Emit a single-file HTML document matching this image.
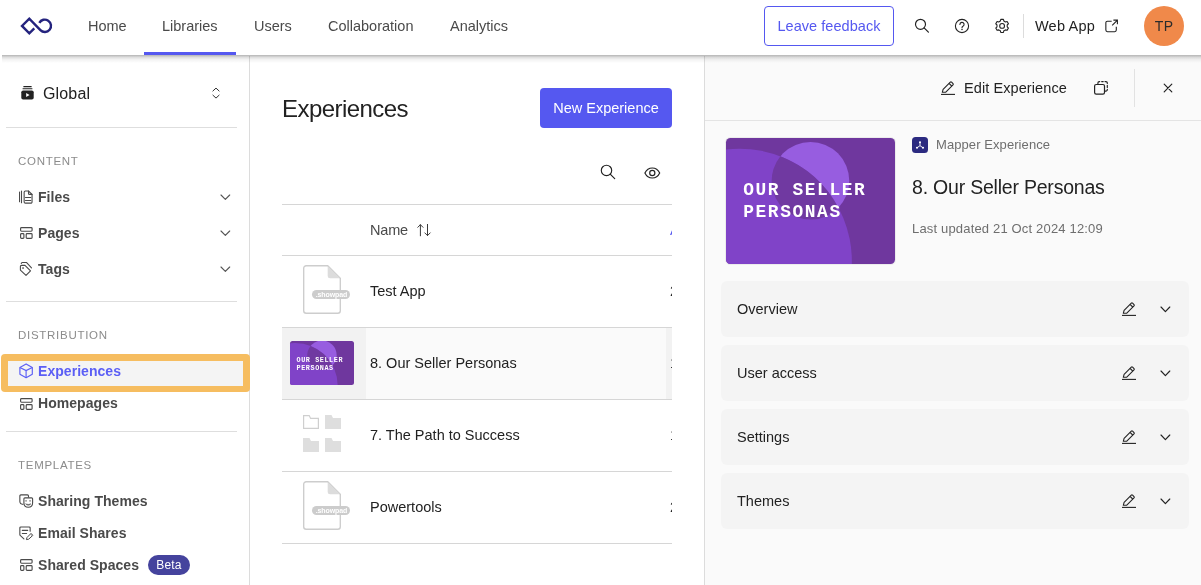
<!DOCTYPE html>
<html lang="en">
<head>
<meta charset="utf-8">
<title>Experiences</title>
<style>
*{box-sizing:border-box;margin:0;padding:0}
html,body{width:1201px;height:585px;overflow:hidden;background:#fff;font-family:"Liberation Sans",sans-serif;color:#222;}
body{position:relative}
#wrap{position:absolute;left:0;top:0;width:1201px;height:585px;will-change:transform;background:transparent}
.abs{position:absolute}
#hdr{position:absolute;left:2px;top:0;width:1199px;height:55px;background:#fff;z-index:5}
#hshadow{position:absolute;left:2px;top:55px;width:1199px;height:8px;z-index:6;background:linear-gradient(to bottom,rgba(0,0,0,.30) 0,rgba(0,0,0,.22) 1px,rgba(0,0,0,.12) 2.5px,rgba(0,0,0,.05) 4.5px,rgba(0,0,0,0) 8px)}
#hdr .in{position:absolute;left:-2px;top:0;width:1201px;height:55px}
.nav{position:absolute;top:18px;font-size:14.5px;color:#4a4a4a;line-height:17px;white-space:nowrap}
#tabline{position:absolute;left:144px;top:52px;width:92px;height:3px;background:#5558f0}
#fb{position:absolute;left:764px;top:6px;width:130px;height:40px;border:1px solid #5558f0;border-radius:4px;color:#5558f0;font-size:14.5px;line-height:39px;text-align:center;letter-spacing:.05px}
#avatar{position:absolute;left:1143.5px;top:5.5px;width:40px;height:40px;border-radius:50%;background:#f0894a;color:#2b2b2b;font-size:14px;line-height:40px;text-align:center;letter-spacing:.5px;padding-left:1.5px}
#side{position:absolute;left:0;top:56px;width:250px;height:529px;background:#fff;border-right:1px solid #dcdcdc}
.hr{position:absolute;height:1px;background:#dedede}
.sec{position:absolute;left:18px;font-size:11.5px;color:#8c8c8c;letter-spacing:.72px;line-height:14px;white-space:nowrap}
.item{position:absolute;left:38px;font-size:14px;font-weight:bold;color:#4a4a4a;line-height:17px;letter-spacing:.05px;white-space:nowrap}
#panel{position:absolute;left:704px;top:56px;width:497px;height:529px;background:#fafafa;border-left:1px solid #dcdcdc}
.row{position:absolute;left:282px;width:390px;height:1px;background:#d6d6d6}
.rname{position:absolute;left:370px;font-size:14.5px;color:#222;line-height:17px;white-space:nowrap}
.acc{position:absolute;left:721px;width:468px;height:56px;background:#f4f4f4;border-radius:6px}
.acc span{position:absolute;left:16px;top:20px;font-size:14.5px;line-height:17px;color:#222;white-space:nowrap}
</style>
</head>
<body>
<div id="wrap">

<div id="hdr"><div class="in">
<svg class="abs" style="left:18px;top:14px" width="36" height="24" viewBox="18 14 36 24" fill="none" ><path d="M34.3 28.3L29.3 33.25L22 25.95L29.3 18.65L40.42 30.18A6.2 6.2 0 1 0 39.33 22.89" stroke="#24237e" stroke-width="2.4" stroke-linejoin="miter"/></svg>
<div class="nav" style="left:88px">Home</div>
<div class="nav" style="left:162px">Libraries</div>
<div class="nav" style="left:254px">Users</div>
<div class="nav" style="left:328px">Collaboration</div>
<div class="nav" style="left:450px">Analytics</div>
<div id="tabline"></div><div id="fb">Leave feedback</div>
<svg class="abs" style="left:914px;top:18px" width="16" height="16" viewBox="0 0 16 16" fill="none" ><circle cx="6.5" cy="6.3" r="5" stroke="#222" stroke-width="1.15"/><path d="M10.1 9.9L14.4 14.2" stroke="#222" stroke-width="1.2" stroke-linecap="round"/></svg>
<svg class="abs" style="left:954px;top:18px" width="16" height="16" viewBox="0 0 16 16" fill="none" ><circle cx="8" cy="8" r="6.6" stroke="#222" stroke-width="1.1"/><path d="M5.9 6.4a2.1 2.1 0 1 1 3.1 1.9c-.7.4-1 .8-1 1.5" stroke="#222" stroke-width="1.1" stroke-linecap="round"/><circle cx="8" cy="11.6" r=".75" fill="#222"/></svg>
<svg class="abs" style="left:994px;top:18px" width="16" height="16" viewBox="0 0 16 16" fill="none" ><path d="M6.34 3.01L6.78 1.33L9.42 1.33L9.86 3.01L11.46 3.93L13.13 3.47L14.45 5.76L13.22 6.98L13.22 8.82L14.45 10.04L13.13 12.33L11.46 11.87L9.86 12.79L9.42 14.47L6.78 14.47L6.34 12.79L4.74 11.87L3.07 12.33L1.75 10.04L2.98 8.82L2.98 6.98L1.75 5.76L3.07 3.47L4.74 3.93Z" stroke="#222" stroke-width="1.1" stroke-linejoin="round"/><circle cx="8.1" cy="7.9" r="2.4" stroke="#222" stroke-width="1.1"/></svg>
<div class="abs" style="left:1023px;top:14px;width:1px;height:24px;background:#dcdcdc"></div>
<div class="nav" style="left:1035px;color:#222;letter-spacing:.2px">Web App</div>
<svg class="abs" style="left:1104px;top:18.5px" width="15" height="14" viewBox="0 0 15 14" fill="none" ><path d="M7.7 2.25H3.45A1.6 1.6 0 0 0 1.85 3.85V11.1A1.6 1.6 0 0 0 3.45 12.7H10.7A1.6 1.6 0 0 0 12.3 11.1V7.8" stroke="#222" stroke-width="1.1"/><path d="M9.4 1.15H13.4V5.15M13.2 1.35L8.2 6.35" stroke="#222" stroke-width="1.1"/></svg>
<div id="avatar">TP</div>
</div></div><div id="hshadow"></div>
<div id="side"></div><div id="panel"></div>
<svg class="abs" style="left:20.5px;top:85.5px" width="13" height="14" viewBox="0 0 13 14" fill="none" ><path d="M2.4 .6H10.6M1.6 2.7H11.4" stroke="#222" stroke-width="1.1"/><rect x=".3" y="4.4" width="12.4" height="9.2" rx="1.8" fill="#222"/><path d="M5.2 6.9V11.1L8.6 9Z" fill="#fff"/></svg>
<div class="abs" style="left:43px;top:84px;font-size:16px;line-height:19px;color:#222;letter-spacing:.15px">Global</div>
<svg class="abs" style="left:211px;top:86px" width="10" height="14" viewBox="0 0 10 14" fill="none" ><path d="M1.9 5L5 2.1L8.1 5M1.9 9.2L5 12.1L8.1 9.2" stroke="#333" stroke-width="1" stroke-linecap="round" stroke-linejoin="round"/></svg>
<div class="hr" style="left:6px;top:127px;width:231px"></div>
<div class="sec" style="top:154px">CONTENT</div>
<svg class="abs" style="left:19px;top:190px" width="15" height="14" viewBox="0 0 15 14" fill="none" ><path d="M.5 2.1V11.7M2.5 1V12.8" stroke="#4a4a4a" stroke-width="1.1" stroke-linecap="round"/><path d="M6.4 .95H9.4L13.05 4.5V11.9a1.25 1.25 0 0 1-1.25 1.25H6.4a1.25 1.25 0 0 1-1.25-1.25V2.2A1.25 1.25 0 0 1 6.4 .95Z" stroke="#4a4a4a" stroke-width="1.1" stroke-linejoin="round"/><path d="M9.5 1.1V3.4a1 1 0 0 0 1 1H13M6.5 7.5H11.8M6.5 10.5H11.8" stroke="#4a4a4a" stroke-width="1.1" stroke-linecap="round"/></svg>
<div class="item" style="top:189px">Files</div>
<svg class="abs" style="left:19.7px;top:227.2px" width="14" height="13" viewBox="0 0 14 13" fill="none" ><rect x=".6" y=".6" width="11.5" height="3.6" rx=".9" stroke="#4a4a4a" stroke-width="1.15"/><rect x=".6" y="6.6" width="3.3" height="4.7" rx=".9" stroke="#4a4a4a" stroke-width="1.15"/><rect x="6.2" y="6.6" width="5.9" height="4.7" rx=".9" stroke="#4a4a4a" stroke-width="1.15"/></svg>
<div class="item" style="top:225px">Pages</div>
<svg class="abs" style="left:19px;top:261px" width="14" height="15" viewBox="0 0 14 15" fill="none" ><path d="M1.4 9.1V5.4a1 1 0 0 1 1-1H6L11.5 9.8L7 14.4Z" stroke="#4a4a4a" stroke-width="1.1" stroke-linejoin="round"/><path d="M2.3 2.5a1 1 0 0 1 1-1.05H7.4L12.5 6.9" stroke="#4a4a4a" stroke-width="1.1" stroke-linecap="round" stroke-linejoin="round"/><rect x="3.3" y="6.3" width="1.5" height="1.5" fill="#4a4a4a"/></svg>
<div class="item" style="top:261px">Tags</div>
<svg class="abs" style="left:218.6px;top:192.8px" width="12.7" height="8.3" viewBox="0 0 12.7 8.3" fill="none" ><path d="M2 2L6.35 6.3L10.7 2" stroke="#555" stroke-width="1.15" stroke-linecap="round" stroke-linejoin="round"/></svg>
<svg class="abs" style="left:218.6px;top:228.8px" width="12.7" height="8.3" viewBox="0 0 12.7 8.3" fill="none" ><path d="M2 2L6.35 6.3L10.7 2" stroke="#555" stroke-width="1.15" stroke-linecap="round" stroke-linejoin="round"/></svg>
<svg class="abs" style="left:218.6px;top:264.8px" width="12.7" height="8.3" viewBox="0 0 12.7 8.3" fill="none" ><path d="M2 2L6.35 6.3L10.7 2" stroke="#555" stroke-width="1.15" stroke-linecap="round" stroke-linejoin="round"/></svg>
<div class="hr" style="left:6px;top:301px;width:231px"></div>
<div class="sec" style="top:328px">DISTRIBUTION</div>
<div class="abs" style="left:1px;top:353.5px;width:249px;height:38.5px;background:#f6bd60;border-radius:4px"></div>
<div class="abs" style="left:8px;top:360.5px;width:235px;height:25px;background:#f4f4f4"></div>
<svg class="abs" style="left:19px;top:363px" width="15" height="16" viewBox="0 0 15 16" fill="none" ><path d="M7.1 .9L13.3 4.4V11.2L7.1 14.7L.9 11.2V4.4Z" stroke="#5b5ef5" stroke-width="1.15" stroke-linejoin="round"/><path d="M.9 4.4L7.1 7.6L13.3 4.4M7.1 7.6V14.7" stroke="#5b5ef5" stroke-width="1.15"/></svg>
<div class="item" style="top:363px;color:#5b5ef5">Experiences</div>
<svg class="abs" style="left:19.7px;top:398.2px" width="14" height="13" viewBox="0 0 14 13" fill="none" ><rect x=".6" y=".6" width="11.5" height="3.6" rx=".9" stroke="#4a4a4a" stroke-width="1.15"/><rect x=".6" y="6.6" width="3.3" height="4.7" rx=".9" stroke="#4a4a4a" stroke-width="1.15"/><rect x="6.2" y="6.6" width="5.9" height="4.7" rx=".9" stroke="#4a4a4a" stroke-width="1.15"/></svg>
<div class="item" style="top:395px">Homepages</div>
<div class="hr" style="left:6px;top:431px;width:231px"></div>
<div class="sec" style="top:458px">TEMPLATES</div>
<svg class="abs" style="left:19px;top:494px" width="15" height="15" viewBox="0 0 15 15" fill="none" ><path d="M9.5 3.6V1.9a1 1 0 0 0-1-1H1.85a1 1 0 0 0-1 1V7.4C.85 9 2.2 10.1 4.4 10.4" stroke="#4a4a4a" stroke-width="1.1"/><path d="M5.9 3.85H12.6a1 1 0 0 1 1 1V9C13.6 11.5 11.7 13.2 9.25 13.2S4.9 11.5 4.9 9V4.85a1 1 0 0 1 1-1Z" stroke="#4a4a4a" stroke-width="1.1"/><path d="M6.5 9.7Q9.25 13 12 9.7Q9.25 11.2 6.5 9.7Z" fill="#4a4a4a" stroke="#4a4a4a" stroke-width=".4" stroke-linejoin="round"/><rect x="6.3" y="6.1" width="1.5" height="1.5" fill="#888"/><rect x="10.3" y="6.1" width="1.5" height="1.5" fill="#888"/></svg>
<div class="item" style="top:493px">Sharing Themes</div>
<svg class="abs" style="left:19px;top:526px" width="16" height="15" viewBox="0 0 16 15" fill="none" ><path d="M11.15 5.3V1.95a1 1 0 0 0-1-1H1.85a1 1 0 0 0-1 1V8.4a1.6 1.6 0 0 0 .6 1.25L4.9 12.8" stroke="#4a4a4a" stroke-width="1.1" stroke-linecap="round"/><path d="M3.3 4.4H8.7M3.3 7.5H7.6" stroke="#4a4a4a" stroke-width="1.1" stroke-linecap="round"/><path d="M7.4 13.6L8 11.5L12 7.4L13.9 9.3L9.7 13.2Z" stroke="#4a4a4a" stroke-width="1" stroke-linejoin="round"/><path d="M11.1 8.3L12 7.4L13.9 9.3L13 10.2Z" fill="#999"/></svg>
<div class="item" style="top:525px">Email Shares</div>
<svg class="abs" style="left:19.7px;top:558.9px" width="14" height="13" viewBox="0 0 14 13" fill="none" ><rect x=".6" y=".6" width="11.5" height="3.6" rx=".9" stroke="#4a4a4a" stroke-width="1.15"/><rect x=".6" y="6.6" width="3.3" height="4.7" rx=".9" stroke="#4a4a4a" stroke-width="1.15"/><rect x="6.2" y="6.6" width="5.9" height="4.7" rx=".9" stroke="#4a4a4a" stroke-width="1.15"/></svg>
<div class="item" style="top:557px">Shared Spaces</div>
<div class="abs" style="left:148px;top:555px;width:42px;height:20px;border-radius:10px;background:#45439d;color:#fff;font-size:12px;line-height:20px;text-align:center;letter-spacing:.15px">Beta</div>
<div class="abs" style="left:282px;top:95px;font-size:24px;line-height:28px;color:#222;letter-spacing:-.55px">Experiences</div>
<div class="abs" style="left:540px;top:88px;width:132px;height:40px;background:#5558f0;border-radius:4px;color:#fff;font-size:14.5px;line-height:40px;text-align:center">New Experience</div>
<svg class="abs" style="left:600px;top:164px" width="16" height="16" viewBox="0 0 16 16" fill="none" ><circle cx="6.5" cy="6.4" r="5.2" stroke="#222" stroke-width="1.15"/><path d="M10.2 10.1L14.7 14.6" stroke="#222" stroke-width="1.2" stroke-linecap="round"/></svg>
<svg class="abs" style="left:644px;top:167px" width="17" height="12" viewBox="0 0 17 12" fill="none" ><path d="M.9 6C2.4 2.9 5.2 1 8.3 1S14.2 2.9 15.7 6C14.2 9.1 11.4 11 8.3 11S2.4 9.1 .9 6Z" stroke="#222" stroke-width="1.15"/><circle cx="8.3" cy="6" r="2.6" stroke="#222" stroke-width="1.15"/></svg>
<div class="row" style="top:204px"></div>
<div class="abs" style="left:370px;top:222px;font-size:14.5px;line-height:17px;color:#4a4a4a;letter-spacing:-.2px">Name</div>
<svg class="abs" style="left:416px;top:224px" width="16" height="13" viewBox="0 0 16 13" fill="none" ><path d="M4.4 11.8V.7M1.8 3.3L4.4 .7L7 3.3M11.5 .3V11.5M8.8 8.9L11.5 11.6L14.2 8.9" stroke="#3a3a3a" stroke-width="1" stroke-linecap="round" stroke-linejoin="round"/></svg>
<div class="abs" style="left:670px;top:222px;width:2px;height:17px;overflow:hidden;font-size:14.5px;line-height:17px;color:#5558f0">Assigned</div>
<div class="row" style="top:255px"></div>
<svg class="abs" style="left:303px;top:265px" width="40" height="51" viewBox="0 0 40 51" fill="none" ><path d="M3.2 .7H24.7L37.3 13.3V45.7a2.5 2.5 0 0 1-2.5 2.5H3.2A2.5 2.5 0 0 1 .7 45.7V3.2A2.5 2.5 0 0 1 3.2 .7Z" fill="#fff" stroke="#cdcdcd" stroke-width="1.35"/><path d="M24.7 .9L37.1 13.3H27.2a2.5 2.5 0 0 1-2.5-2.5Z" fill="#dcdcdc"/></svg><div class="abs" style="left:312.4px;top:289.5px;width:38px;height:9.2px;border-radius:5px;background:#cccccc;color:#fff;font-size:7px;font-weight:bold;line-height:9.2px;text-align:center;letter-spacing:-.1px">.showpad</div>
<div class="rname" style="top:283px">Test App</div>
<div class="row" style="top:327px"></div>
<div class="abs" style="left:282px;top:328px;width:390px;height:71px;background:#fafafa"></div>
<div class="abs" style="left:282px;top:328px;width:84px;height:71px;background:#f2f2f2"></div>
<div class="abs" style="left:666px;top:328px;width:6px;height:71px;background:#f2f2f2"></div>
<div class="abs" style="left:290px;top:341px;width:64px;height:44px;border-radius:2.5px;overflow:hidden;background:#6f379e;"><svg class="abs" style="left:0;top:-2.16px" width="64" height="47.81" viewBox="0 0 170 127"><circle cx="85" cy="43" r="39" fill="#975de0"/><circle cx="13.6" cy="123.7" r="113" fill="#8043c8"/><path d="M54.7 18.44A113 113 0 0 1 113.07 70.08A39 39 0 0 1 54.7 18.44Z" fill="#7039a1"/></svg><div class="abs" style="left:6.51px;top:14.72px;font-family:'Liberation Mono',monospace;font-weight:bold;font-size:6.78px;letter-spacing:0.60px;line-height:8.21px;color:#fff;white-space:nowrap">OUR SELLER<br>PERSONAS</div></div>
<div class="rname" style="top:355px">8. Our Seller Personas</div>
<div class="row" style="top:399px"></div>
<svg class="abs" style="left:303px;top:415px" width="16" height="14" viewBox="0 0 16 14" fill="none" ><path d="M.6 .6H6.2L7.6 3.4H15.4V13.4H.6Z" fill="#fff" stroke="#cfcfcf" stroke-width="1.2"/></svg>
<svg class="abs" style="left:325px;top:415px" width="16" height="14" viewBox="0 0 16 14" fill="none" ><path d="M0 0H6.5L8 3H16V14H0Z" fill="#dedede"/></svg>
<svg class="abs" style="left:303px;top:438px" width="16" height="14" viewBox="0 0 16 14" fill="none" ><path d="M0 0H6.5L8 3H16V14H0Z" fill="#dedede"/></svg>
<svg class="abs" style="left:325px;top:438px" width="16" height="14" viewBox="0 0 16 14" fill="none" ><path d="M0 0H6.5L8 3H16V14H0Z" fill="#dedede"/></svg>
<div class="rname" style="top:427px">7. The Path to Success</div>
<div class="row" style="top:471px"></div>
<svg class="abs" style="left:303px;top:481px" width="40" height="51" viewBox="0 0 40 51" fill="none" ><path d="M3.2 .7H24.7L37.3 13.3V45.7a2.5 2.5 0 0 1-2.5 2.5H3.2A2.5 2.5 0 0 1 .7 45.7V3.2A2.5 2.5 0 0 1 3.2 .7Z" fill="#fff" stroke="#cdcdcd" stroke-width="1.35"/><path d="M24.7 .9L37.1 13.3H27.2a2.5 2.5 0 0 1-2.5-2.5Z" fill="#dcdcdc"/></svg><div class="abs" style="left:312.4px;top:505.5px;width:38px;height:9.2px;border-radius:5px;background:#cccccc;color:#fff;font-size:7px;font-weight:bold;line-height:9.2px;text-align:center;letter-spacing:-.1px">.showpad</div>
<div class="rname" style="top:499px">Powertools</div>
<div class="row" style="top:543px"></div>
<div class="abs" style="left:670px;top:283px;width:2px;height:17px;overflow:hidden;font-size:14.5px;line-height:17px;color:#222">2</div>
<div class="abs" style="left:670px;top:355px;width:2px;height:17px;overflow:hidden;font-size:14.5px;line-height:17px;color:#222">1</div>
<div class="abs" style="left:670px;top:427px;width:2px;height:17px;overflow:hidden;font-size:14.5px;line-height:17px;color:#222">1</div>
<div class="abs" style="left:670px;top:499px;width:2px;height:17px;overflow:hidden;font-size:14.5px;line-height:17px;color:#222">2</div>
<svg class="abs" style="left:940px;top:79.5px" width="16" height="16" viewBox="0 0 16 16" fill="none" ><path d="M1 14.4H15" stroke="#222" stroke-width="1.1"/><path d="M2.3 12.3L3.1 9.4L10.3 2.2a.9.9 0 0 1 1.3 0L13 3.6a.9.9 0 0 1 0 1.3L5.8 12.1Z" stroke="#222" stroke-width="1.1" stroke-linejoin="round"/><path d="M9.2 3.5L11.8 6.1" stroke="#222" stroke-width="1.1"/></svg>
<div class="abs" style="left:964px;top:80px;font-size:14.5px;line-height:17px;color:#222;letter-spacing:.09px;white-space:nowrap">Edit Experience</div>
<svg class="abs" style="left:1093px;top:80px" width="16" height="16" viewBox="0 0 16 16" fill="none" ><path d="M4.9 4.2V3A1.4 1.4 0 0 1 6.3 1.6H6.7M8.7 1.6H10.2M12 1.6H12.9A1.4 1.4 0 0 1 14.3 3V3.4M14.3 5.3V7.4M14.3 9.3V9.7A1.4 1.4 0 0 1 12.9 11.1H11.8" stroke="#222" stroke-width="1.15" stroke-linecap="round"/><rect x="1.6" y="4.5" width="9.9" height="9.7" rx="1.6" fill="#fafafa" stroke="#222" stroke-width="1.2"/></svg>
<div class="abs" style="left:1134px;top:69px;width:1px;height:38px;background:#e2e2e2"></div>
<svg class="abs" style="left:1163px;top:83px" width="10" height="10" viewBox="0 0 10 10" fill="none" ><path d="M1.2 1.2L8.8 8.8M8.8 1.2L1.2 8.8" stroke="#222" stroke-width="1.2" stroke-linecap="round"/></svg>
<div class="hr" style="left:705px;top:120px;width:496px;background:#e4e4e4"></div>
<div class="abs" style="left:726px;top:138px;width:169px;height:126px;border-radius:4.5px;overflow:hidden;background:#6f379e;box-shadow:0 0 0 1px #ececec;"><svg class="abs" style="left:0;top:0.00px" width="169" height="126.25" viewBox="0 0 170 127"><circle cx="85" cy="43" r="39" fill="#975de0"/><circle cx="13.6" cy="123.7" r="113" fill="#8043c8"/><path d="M54.7 18.44A113 113 0 0 1 113.07 70.08A39 39 0 0 1 54.7 18.44Z" fill="#7039a1"/></svg><div class="abs" style="left:17.20px;top:42.05px;font-family:'Liberation Mono',monospace;font-weight:bold;font-size:17.89px;letter-spacing:1.59px;line-height:21.67px;color:#fff;white-space:nowrap">OUR SELLER<br>PERSONAS</div></div>
<div class="abs" style="left:912.2px;top:137px;width:15.7px;height:15.8px;border-radius:3.5px;background:#2b2a80"></div>
<svg class="abs" style="left:912px;top:137px" width="16" height="16" viewBox="0 0 16 16" fill="none" ><path d="M8 5.4V8.7L5.2 10.6M8 8.7L10.8 10.6" stroke="#fff" stroke-width=".9"/><circle cx="8" cy="5.2" r="1.05" fill="#fff"/><circle cx="5" cy="10.8" r="1.05" fill="#fff"/><circle cx="11" cy="10.8" r="1.05" fill="#fff"/></svg>
<div class="abs" style="left:936px;top:137px;font-size:13px;line-height:15px;color:#6e6e6e;letter-spacing:.08px;white-space:nowrap">Mapper Experience</div>
<div class="abs" style="left:912px;top:176px;font-size:19.5px;line-height:23px;color:#222;letter-spacing:-.21px;white-space:nowrap">8. Our Seller Personas</div>
<div class="abs" style="left:912px;top:221px;font-size:13px;line-height:15px;color:#6e6e6e;letter-spacing:.17px;white-space:nowrap">Last updated 21 Oct 2024 12:09</div>
<div class="acc" style="top:281px"><span>Overview</span></div>
<svg class="abs" style="left:1121px;top:300.8px" width="16" height="16" viewBox="0 0 16 16" fill="none" ><path d="M1 14.4H15" stroke="#222" stroke-width="1.1"/><path d="M2.3 12.3L3.1 9.4L10.3 2.2a.9.9 0 0 1 1.3 0L13 3.6a.9.9 0 0 1 0 1.3L5.8 12.1Z" stroke="#222" stroke-width="1.1" stroke-linejoin="round"/><path d="M9.2 3.5L11.8 6.1" stroke="#222" stroke-width="1.1"/></svg>
<svg class="abs" style="left:1158.6px;top:304.5px" width="12.8" height="8.7" viewBox="0 0 12.8 8.7" fill="none" ><path d="M2 2L6.4 6.7L10.8 2" stroke="#222" stroke-width="1.15" stroke-linecap="round" stroke-linejoin="round"/></svg>
<div class="acc" style="top:345px"><span>User access</span></div>
<svg class="abs" style="left:1121px;top:364.8px" width="16" height="16" viewBox="0 0 16 16" fill="none" ><path d="M1 14.4H15" stroke="#222" stroke-width="1.1"/><path d="M2.3 12.3L3.1 9.4L10.3 2.2a.9.9 0 0 1 1.3 0L13 3.6a.9.9 0 0 1 0 1.3L5.8 12.1Z" stroke="#222" stroke-width="1.1" stroke-linejoin="round"/><path d="M9.2 3.5L11.8 6.1" stroke="#222" stroke-width="1.1"/></svg>
<svg class="abs" style="left:1158.6px;top:368.5px" width="12.8" height="8.7" viewBox="0 0 12.8 8.7" fill="none" ><path d="M2 2L6.4 6.7L10.8 2" stroke="#222" stroke-width="1.15" stroke-linecap="round" stroke-linejoin="round"/></svg>
<div class="acc" style="top:409px"><span>Settings</span></div>
<svg class="abs" style="left:1121px;top:428.8px" width="16" height="16" viewBox="0 0 16 16" fill="none" ><path d="M1 14.4H15" stroke="#222" stroke-width="1.1"/><path d="M2.3 12.3L3.1 9.4L10.3 2.2a.9.9 0 0 1 1.3 0L13 3.6a.9.9 0 0 1 0 1.3L5.8 12.1Z" stroke="#222" stroke-width="1.1" stroke-linejoin="round"/><path d="M9.2 3.5L11.8 6.1" stroke="#222" stroke-width="1.1"/></svg>
<svg class="abs" style="left:1158.6px;top:432.5px" width="12.8" height="8.7" viewBox="0 0 12.8 8.7" fill="none" ><path d="M2 2L6.4 6.7L10.8 2" stroke="#222" stroke-width="1.15" stroke-linecap="round" stroke-linejoin="round"/></svg>
<div class="acc" style="top:473px"><span>Themes</span></div>
<svg class="abs" style="left:1121px;top:492.8px" width="16" height="16" viewBox="0 0 16 16" fill="none" ><path d="M1 14.4H15" stroke="#222" stroke-width="1.1"/><path d="M2.3 12.3L3.1 9.4L10.3 2.2a.9.9 0 0 1 1.3 0L13 3.6a.9.9 0 0 1 0 1.3L5.8 12.1Z" stroke="#222" stroke-width="1.1" stroke-linejoin="round"/><path d="M9.2 3.5L11.8 6.1" stroke="#222" stroke-width="1.1"/></svg>
<svg class="abs" style="left:1158.6px;top:496.5px" width="12.8" height="8.7" viewBox="0 0 12.8 8.7" fill="none" ><path d="M2 2L6.4 6.7L10.8 2" stroke="#222" stroke-width="1.15" stroke-linecap="round" stroke-linejoin="round"/></svg>
</div>
</body></html>
